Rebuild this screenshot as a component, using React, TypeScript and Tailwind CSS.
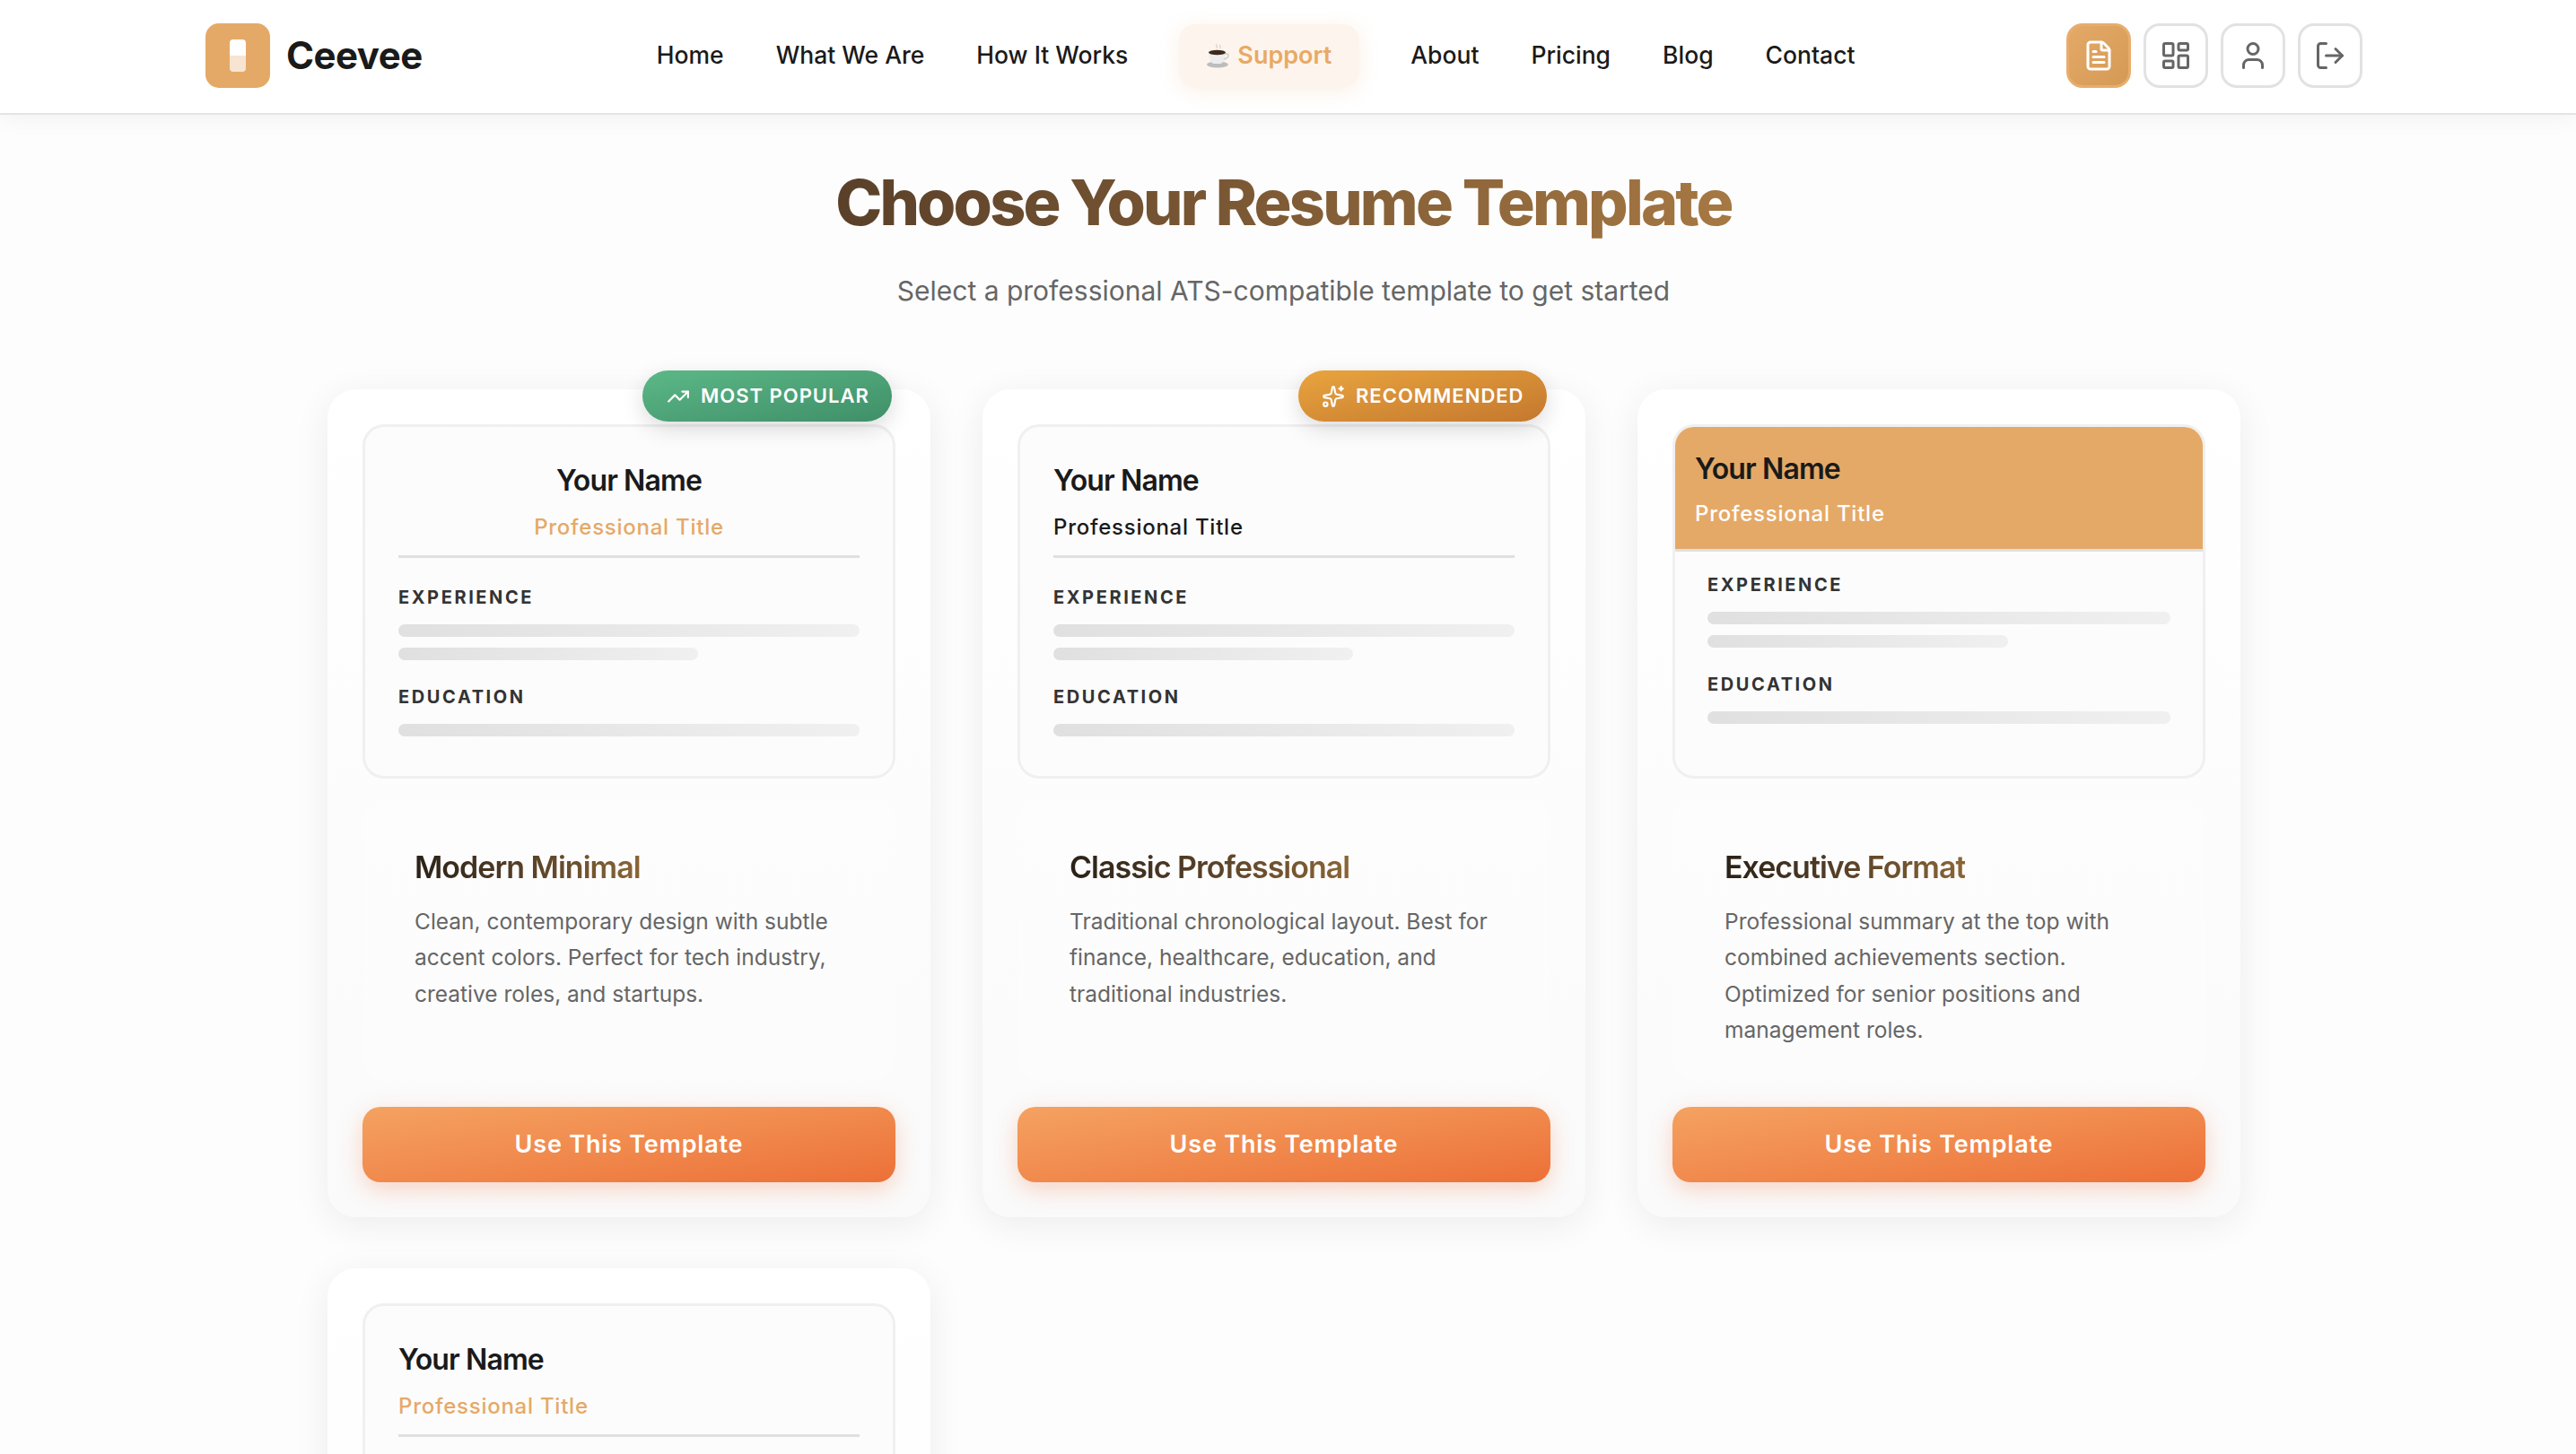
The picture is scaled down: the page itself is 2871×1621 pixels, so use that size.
import { FileText, LayoutDashboard, User, LogOut, TrendingUp, Sparkles } from "lucide-react"

const navLinks = ["Home", "What We Are", "How It Works", "Support", "About", "Pricing", "Blog", "Contact"]

function CoffeeCup() {
    return (
        <svg width="26" height="28" viewBox="0 0 26 28" className="mr-[8px] shrink-0">
            <path d="M11 1c-2 2 2 3 0 5M15 2c-1.500 1.500 1 2.500 0 4" fill="none" stroke="#d8d8d8" strokeWidth="1.500" />
            <ellipse cx="12" cy="24" rx="12" ry="3.500" fill="#bdbdbd" />
            <path d="M2 10h19c0 8-3 13-6 13H8c-3 0-6-5-6-13z" fill="#ececec" />
            <path d="M20 12h2.500c2.500 0 2.500 5-3.500 6" fill="none" stroke="#cfcfcf" strokeWidth="1.600" />
            <ellipse cx="11.500" cy="10.500" rx="9.500" ry="2.800" fill="#3b2a20" />
        </svg>
    )
}

function Navbar() {
    return (
        <nav className="relative z-10 h-[128px] bg-white border-b-[2px] border-[#e4e4e4] shadow-[0_4px_24px_rgba(0,0,0,0.05)] flex items-center pb-[2px] pl-[229px] pr-[238px]">
            <div className="flex items-center gap-[18px]">
                <div className="w-[72px] h-[72px] rounded-[15px] bg-[#e5a967] flex flex-col items-center justify-center">
                    <div className="w-[18px] h-[18px] rounded-t-[4px] bg-white" />
                    <div className="w-[18px] h-[18px] rounded-b-[4px] bg-white/70" />
                </div>
                <span className="text-[42px] leading-none font-bold text-[#1a1a1a] tracking-[-0.5px]">Ceevee</span>
            </div>

            <div className="ml-[261px] flex items-center gap-[58px]">
                {navLinks.map((link) =>
                    link === "Support" ? (
                        <a key={link} className="h-[70px] -mx-[1px] px-[31px] flex items-center rounded-[18px] bg-[#fdf5ed] shadow-[0_4px_22px_rgba(229,169,103,0.18)] text-[27px] font-semibold text-[#e9a965]">
                            <CoffeeCup />
                            {link}
                        </a>
                    ) : (
                        <a key={link} className="text-[26.500px] font-medium text-[#1a1a1a]">{link}</a>
                    )
                )}
            </div>

            <div className="ml-auto flex items-center gap-[14px]">
                <button className="w-[72px] h-[72px] rounded-[18px] border-[3px] border-[#e8ad6c] bg-gradient-to-br from-[#e5a967] to-[#d49a55] text-white flex items-center justify-center">
                    <FileText size={36} strokeWidth={2} />
                </button>
                {[LayoutDashboard, User, LogOut].map((Icon, i) => (
                    <button key={i} className="w-[72px] h-[72px] rounded-[18px] border-[3px] border-[#e2e2e2] bg-white text-[#666666] flex items-center justify-center">
                        <Icon size={36} strokeWidth={2} />
                    </button>
                ))}
            </div>
        </nav>
    )
}

interface Template {
    name: [string, string]
    description: string
    layout: "center" | "left" | "banner"
    titleColor?: string
    badge?: "popular" | "recommended"
}

const templates: Template[] = [
    {
        name: ["Modern", "Minimal"],
        description: "Clean, contemporary design with subtle accent colors. Perfect for tech industry, creative roles, and startups.",
        layout: "center",
        badge: "popular",
    },
    {
        name: ["Classic", "Professional"],
        description: "Traditional chronological layout. Best for finance, healthcare, education, and traditional industries.",
        layout: "left",
        titleColor: "text-[#1a1a1a]",
        badge: "recommended",
    },
    {
        name: ["Executive", "Format"],
        description: "Professional summary at the top with combined achievements section. Optimized for senior positions and management roles.",
        layout: "banner",
    },
    {
        name: ["Functional", "Skills"],
        description: "Skills-first layout that highlights your strengths.",
        layout: "left",
    },
]

function SkeletonBar({ short }: { short?: boolean }) {
    return <div className={`h-[14px] rounded-[7px] bg-gradient-to-r from-[#e0e0e0] to-[#f0f0f0] ${short ? "w-[65%]" : "w-full"}`} />
}

function SectionLabel({ children }: { children: string }) {
    return <div className="text-[20px] leading-[24px] font-bold tracking-[2.600px] text-[#333333]">{children}</div>
}

function ResumeBody({ template }: { template: Template }) {
    return (
        <div className={template.layout === "banner" ? "px-[36px] pt-[25px]" : ""}>
            <SectionLabel>EXPERIENCE</SectionLabel>
            <div className="mt-[18px] flex flex-col gap-[12px]">
                <SkeletonBar />
                <SkeletonBar short />
            </div>
            <div className="mt-[29px]">
                <SectionLabel>EDUCATION</SectionLabel>
            </div>
            <div className="mt-[18px]">
                <SkeletonBar />
            </div>
        </div>
    )
}

function ResumePreview({ template }: { template: Template }) {
    if (template.layout === "banner") {
        return (
            <div className="h-[395px] rounded-[24px] border-[3px] border-[#f0f0f0] bg-[#fcfcfc] overflow-hidden">
                <div className="h-[139px] bg-[#e5a967] border-b-[3px] border-[#e0e0e0] pl-[22px] pt-[25px]">
                    <div className="text-[32px] leading-[44px] font-semibold tracking-[-0.9px] text-[#1a1a1a]">Your Name</div>
                    <div className="mt-[13px] text-[24px] leading-[30px] font-medium tracking-[0.75px] text-white">Professional Title</div>
                </div>
                <ResumeBody template={template} />
            </div>
        )
    }

    const centered = template.layout === "center"
    return (
        <div className="h-[395px] rounded-[24px] border-[3px] border-[#f0f0f0] bg-[#fcfcfc] px-[37px] pt-[38px]">
            <div className={`h-[108px] border-b-[3px] border-[#e0e0e0] ${centered ? "text-center" : ""}`}>
                <div className="text-[32px] leading-[44px] font-semibold tracking-[-0.9px] text-[#1a1a1a]">Your Name</div>
                <div className={`mt-[15px] text-[24px] leading-[30px] font-medium tracking-[0.75px] ${template.titleColor ?? "text-[#e5a967]"}`}>Professional Title</div>
            </div>
            <div className="mt-[32px]">
                <ResumeBody template={template} />
            </div>
        </div>
    )
}

function Badge({ kind }: { kind: "popular" | "recommended" }) {
    const popular = kind === "popular"
    return (
        <div className={`absolute top-[-21px] right-[43px] h-[57px] rounded-full flex items-center gap-[12px] text-white text-[22px] font-semibold tracking-[1px] shadow-[0_8px_24px_rgba(0,0,0,0.14)] ${popular ? "w-[278px] pl-[27px] bg-gradient-to-br from-[#5cb887] to-[#3f8f68]" : "w-[277px] pl-[26px] bg-gradient-to-br from-[#e9a43e] to-[#c4782e]"}`}>
            {popular ? <TrendingUp size={26} /> : <Sparkles size={26} />}
            {popular ? "MOST POPULAR" : "RECOMMENDED"}
        </div>
    )
}

function TemplateCard({ template }: { template: Template }) {
    return (
        <div className="relative h-[923px] rounded-[32px] bg-gradient-to-b from-white to-[#fafafa] shadow-[0_8px_40px_rgba(0,0,0,0.07)] px-[39px] pt-[39px]">
            {template.badge && <Badge kind={template.badge} />}
            <ResumePreview template={template} />

            <div className="mt-[24px] h-[313px] rounded-[24px] bg-gradient-to-b from-[#fdfdfd] to-[#fcfcfc] px-[58px] pt-[54px]">
                <h3 className="text-[34px] leading-[42px] font-semibold tracking-[-1px] w-fit bg-gradient-to-r from-[#2a2118] to-[#8b6536] bg-clip-text text-transparent">
                    {template.name[0]} {template.name[1]}
                </h3>
                <p className="mt-[19px] text-[24.500px] leading-[40.300px] text-[#666666]">{template.description}</p>
            </div>

            <button className="mt-[29px] w-full h-[84px] rounded-[20px] bg-gradient-to-br from-[#f4a261] to-[#ec7038] text-white text-[27px] font-semibold tracking-[0.8px] shadow-[0_8px_26px_rgba(236,112,56,0.28)]">
                Use This Template
            </button>
        </div>
    )
}

export default function App() {
    return (
        <div className="h-[1621px] overflow-hidden bg-[#fdfdfd] font-['Inter',sans-serif]">
            <Navbar />
            <main className="pr-[10px]">
                <div className="text-center pt-[55px]">
                    <h1 className="text-[70px] leading-[85px] font-extrabold tracking-[-2.800px] w-fit mx-auto bg-gradient-to-r from-[#5a4029] to-[#a67843] bg-clip-text text-transparent">
                        Choose Your Resume Template
                    </h1>
                    <p className="mt-[36px] text-[30px] leading-[40px] text-[#666666]">Select a professional ATS-compatible template to get started</p>
                </div>
                <div className="mt-[90px] ml-[365px] w-[2132px] grid grid-cols-3 gap-x-[58px] gap-y-[57px]">
                    {templates.map((template) => (
                        <TemplateCard key={template.name[0]} template={template} />
                    ))}
                </div>
            </main>
        </div>
    )
}
